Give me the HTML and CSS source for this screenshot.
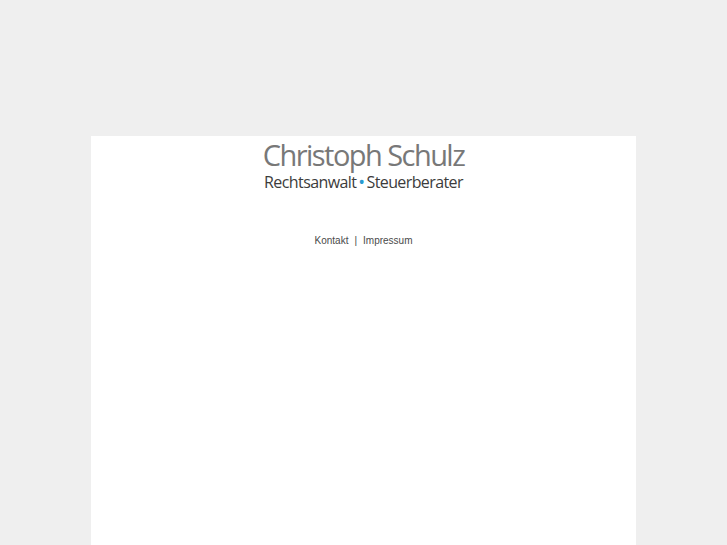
FILE: index.html
```
<!DOCTYPE html>
<html lang="de">
<head>
<meta charset="utf-8">
<title>Christoph Schulz</title>
<link rel="stylesheet" href="styles.css">
</head>
<body>
<div class="page">
  <div class="logo">
    <div class="name">Christoph Schulz</div>
    <div class="sub">Rechtsanwalt<span class="dot">•</span>Steuerberater</div>
  </div>
  <nav class="nav"><a href="#">Kontakt</a><span class="sep">|</span><a href="#">Impressum</a></nav>
</div>
</body>
</html>
```
FILE: styles.css
```
html, body {
  margin: 0;
  padding: 0;
  background: #efefef;
  height: 100%;
}
body {
  padding-top: 136px;
  box-sizing: border-box;
}
.page {
  width: 545px;
  margin: 0 0 0 91px;
  background: #ffffff;
  min-height: 409px;
  display: flex;
  flex-direction: column;
  align-items: center;
}
.logo {
  display: flex;
  flex-direction: column;
  align-items: center;
  padding-top: 4px;
}
.name {
  font-family: "Open Sans", sans-serif;
  font-size: 29px;
  line-height: 30px;
  color: #787878;
  letter-spacing: -1.55px;
}
.sub {
  font-family: "Open Sans", sans-serif;
  font-size: 16px;
  line-height: 20px;
  color: #3c3c3c;
  letter-spacing: -0.6px;
  margin-top: 2px;
}
.dot {
  color: #2a9ad0;
  font-size: 18px;
  line-height: 16px;
  margin: 0 2px;
  vertical-align: -1px;
}
.nav {
  margin-top: 43px;
  font-family: "Liberation Sans", Arial, sans-serif;
  font-size: 10px;
  line-height: 12px;
  color: #4a4a4a;
}
.nav a {
  color: #4a4a4a;
  text-decoration: none;
}
.sep {
  margin: 0 6px;
}
```
